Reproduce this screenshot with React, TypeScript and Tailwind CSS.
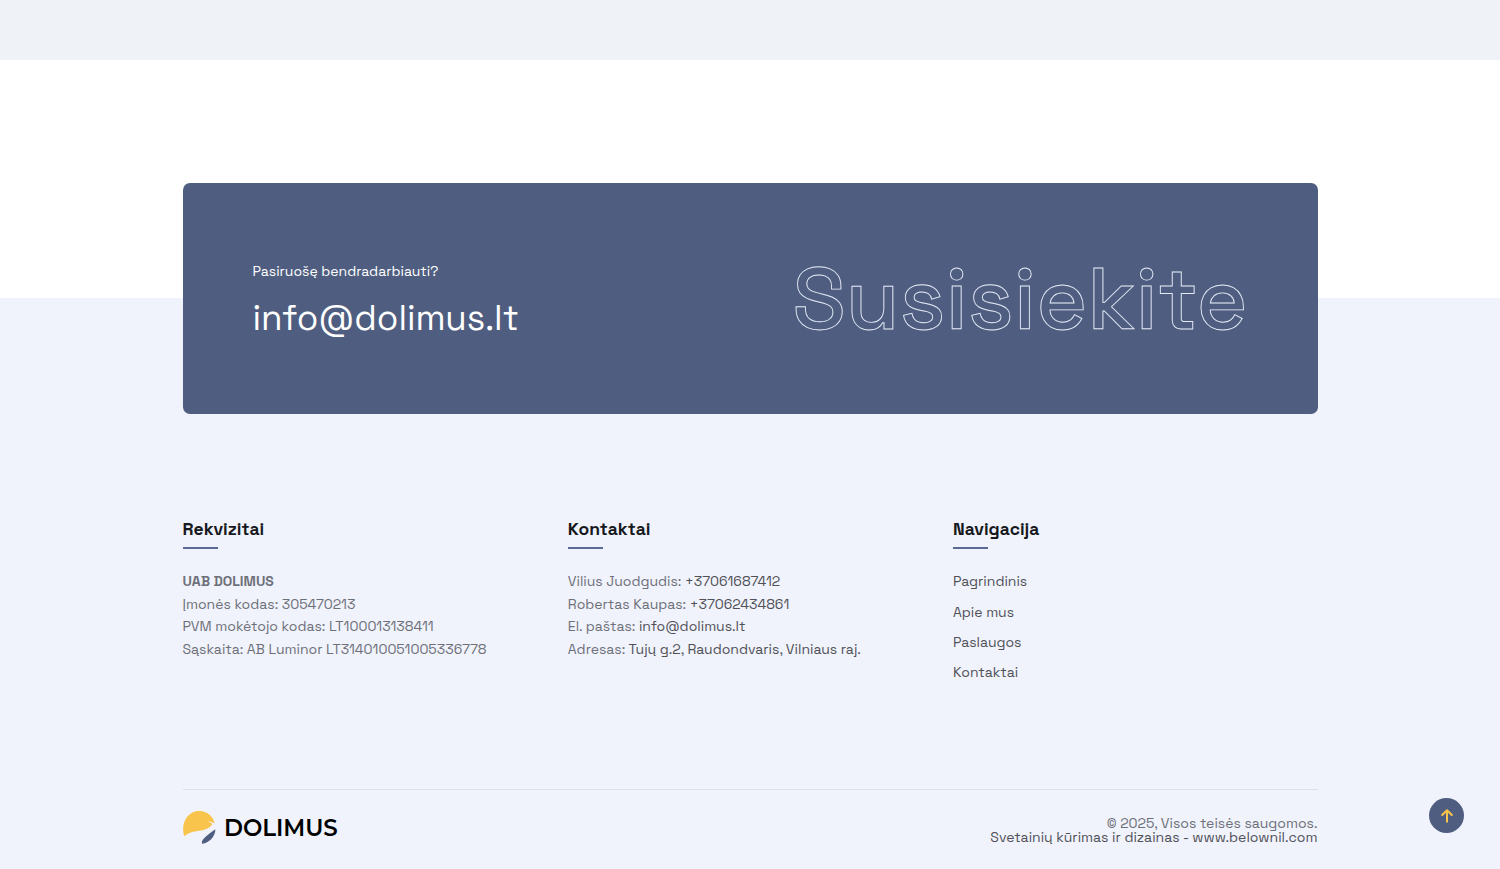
import React from "react";

const details = [
  "Įmonės kodas: 305470213",
  "PVM mokėtojo kodas: LT100013138411",
  "Sąskaita: AB Luminor LT314010051005336778",
];

const contacts = [
  ["Vilius Juodgudis: ", "+37061687412"],
  ["Robertas Kaupas: ", "+37062434861"],
  ["El. paštas: ", "info@dolimus.lt"],
  ["Adresas: ", "Tujų g.2, Raudondvaris, Vilniaus raj."],
];

const links = ["Pagrindinis", "Apie mus", "Paslaugos", "Kontaktai"];

function Heading({ text }: { text: string }) {
  return (
    <h3 className="mb-[21.5px] text-[17.5px] font-semibold leading-6 text-[#17181c]">
      {text}
      <span className="mt-1.5 block h-[1.75px] w-[35px] bg-[#5c6993]" />
    </h3>
  );
}

function Logo() {
  return (
    <a href="#" className="flex items-center gap-[8.5px]">
      <svg width="33" height="33" viewBox="0 0 33 33">
        <path
          d="M1.500 25.200C-.8 20-.2 12 3.600 6.600C7.200 1.800 12 0 16.500.1C24 .3 30 5 31.800 12.600C30.500 11.400 27 10.200 23.500 10.200C26.500 10.700 28.800 11.800 29.300 13.200C27 16.800 22.500 18.800 18 19.600C12 20.600 6.500 20.800 1.500 25.200Z"
          fill="#f9c44c"
        />
        <path d="M32.400 18.200C32.300 25 27 31.800 19 32.700C18 28 24.500 24 32.400 18.200Z" fill="#4f5e80" />
      </svg>
      <span className="pt-[1.5px] font-['Montserrat','Inter',sans-serif] text-[23px] font-semibold leading-none tracking-[-0.05px] text-black">
        DOLIMUS
      </span>
    </a>
  );
}

export default function App() {
  return (
    <div className="relative h-[869px] overflow-hidden bg-white font-['Space_Grotesk','Inter',sans-serif]">
      <div className="h-[60px] bg-[#eff3f8]" />
      <div className="h-[238px]" />
      <footer className="flex h-[571px] flex-col bg-[#f0f3fc]">
        <div className="mx-auto flex h-full w-[1135px] flex-col">
          <section className="relative -mt-[115.5px] flex h-[231.5px] shrink-0 items-center justify-between rounded-[7px] bg-[#4f5e80] px-[70px] text-white">
            <div className="pt-[3px]">
              <p className="text-sm leading-[22px]">Pasiruošę bendradarbiauti?</p>
              <a href="#" className="mt-[14px] block text-[35px] leading-[44px]">
                info@dolimus.lt
              </a>
            </div>
            <p className="pt-[2px] text-[87.5px] font-medium leading-none text-transparent [-webkit-text-stroke:0.9px_#e3e9f5]">
              Susisiekite
            </p>
          </section>

          <div className="mt-[103px] grid grid-cols-[385.3px_385.2px_1fr] text-[14px] leading-[22.5px] text-[#6e7079]">
            <section>
              <Heading text="Rekvizitai" />
              <p className="font-bold">UAB DOLIMUS</p>
              {details.map((text) => (
                <p key={text}>{text}</p>
              ))}
            </section>
            <section>
              <Heading text="Kontaktai" />
              {contacts.map(([label, value]) => (
                <p key={label}>
                  {label}
                  <a href="#" className="text-[#505158]">{value}</a>
                </p>
              ))}
            </section>
            <nav>
              <Heading text="Navigacija" />
              <ul className="flex flex-col gap-[7.900px] text-[#505158]">
                {links.map((text) => (
                  <li key={text}><a href="#">{text}</a></li>
                ))}
              </ul>
            </nav>
          </div>

          <div className="mt-auto flex h-[80px] shrink-0 items-start justify-between border-t border-[#dfe1e9] pt-[21px]">
            <Logo />
            <div className="pt-[5px] text-right text-[14px] leading-[14px] text-[#6e7079]">
              <p>© 2025, Visos teisės saugomos.</p>
              <p className="text-[#505158]">Svetainių kūrimas ir dizainas - www.belownil.com</p>
            </div>
          </div>
        </div>
      </footer>
      <button aria-label="Į viršų" className="absolute left-[1429px] top-[798px] flex size-[35px] items-center justify-center rounded-full bg-[#4f5e80]">
        <svg width="12" height="14" viewBox="0 0 12 14" fill="none" stroke="#f9c44c" strokeWidth="2" strokeLinecap="round" strokeLinejoin="round">
          <path d="M6 12.800V1.200M1.200 6L6 1.200L10.800 6" />
        </svg>
      </button>
    </div>
  );
}
